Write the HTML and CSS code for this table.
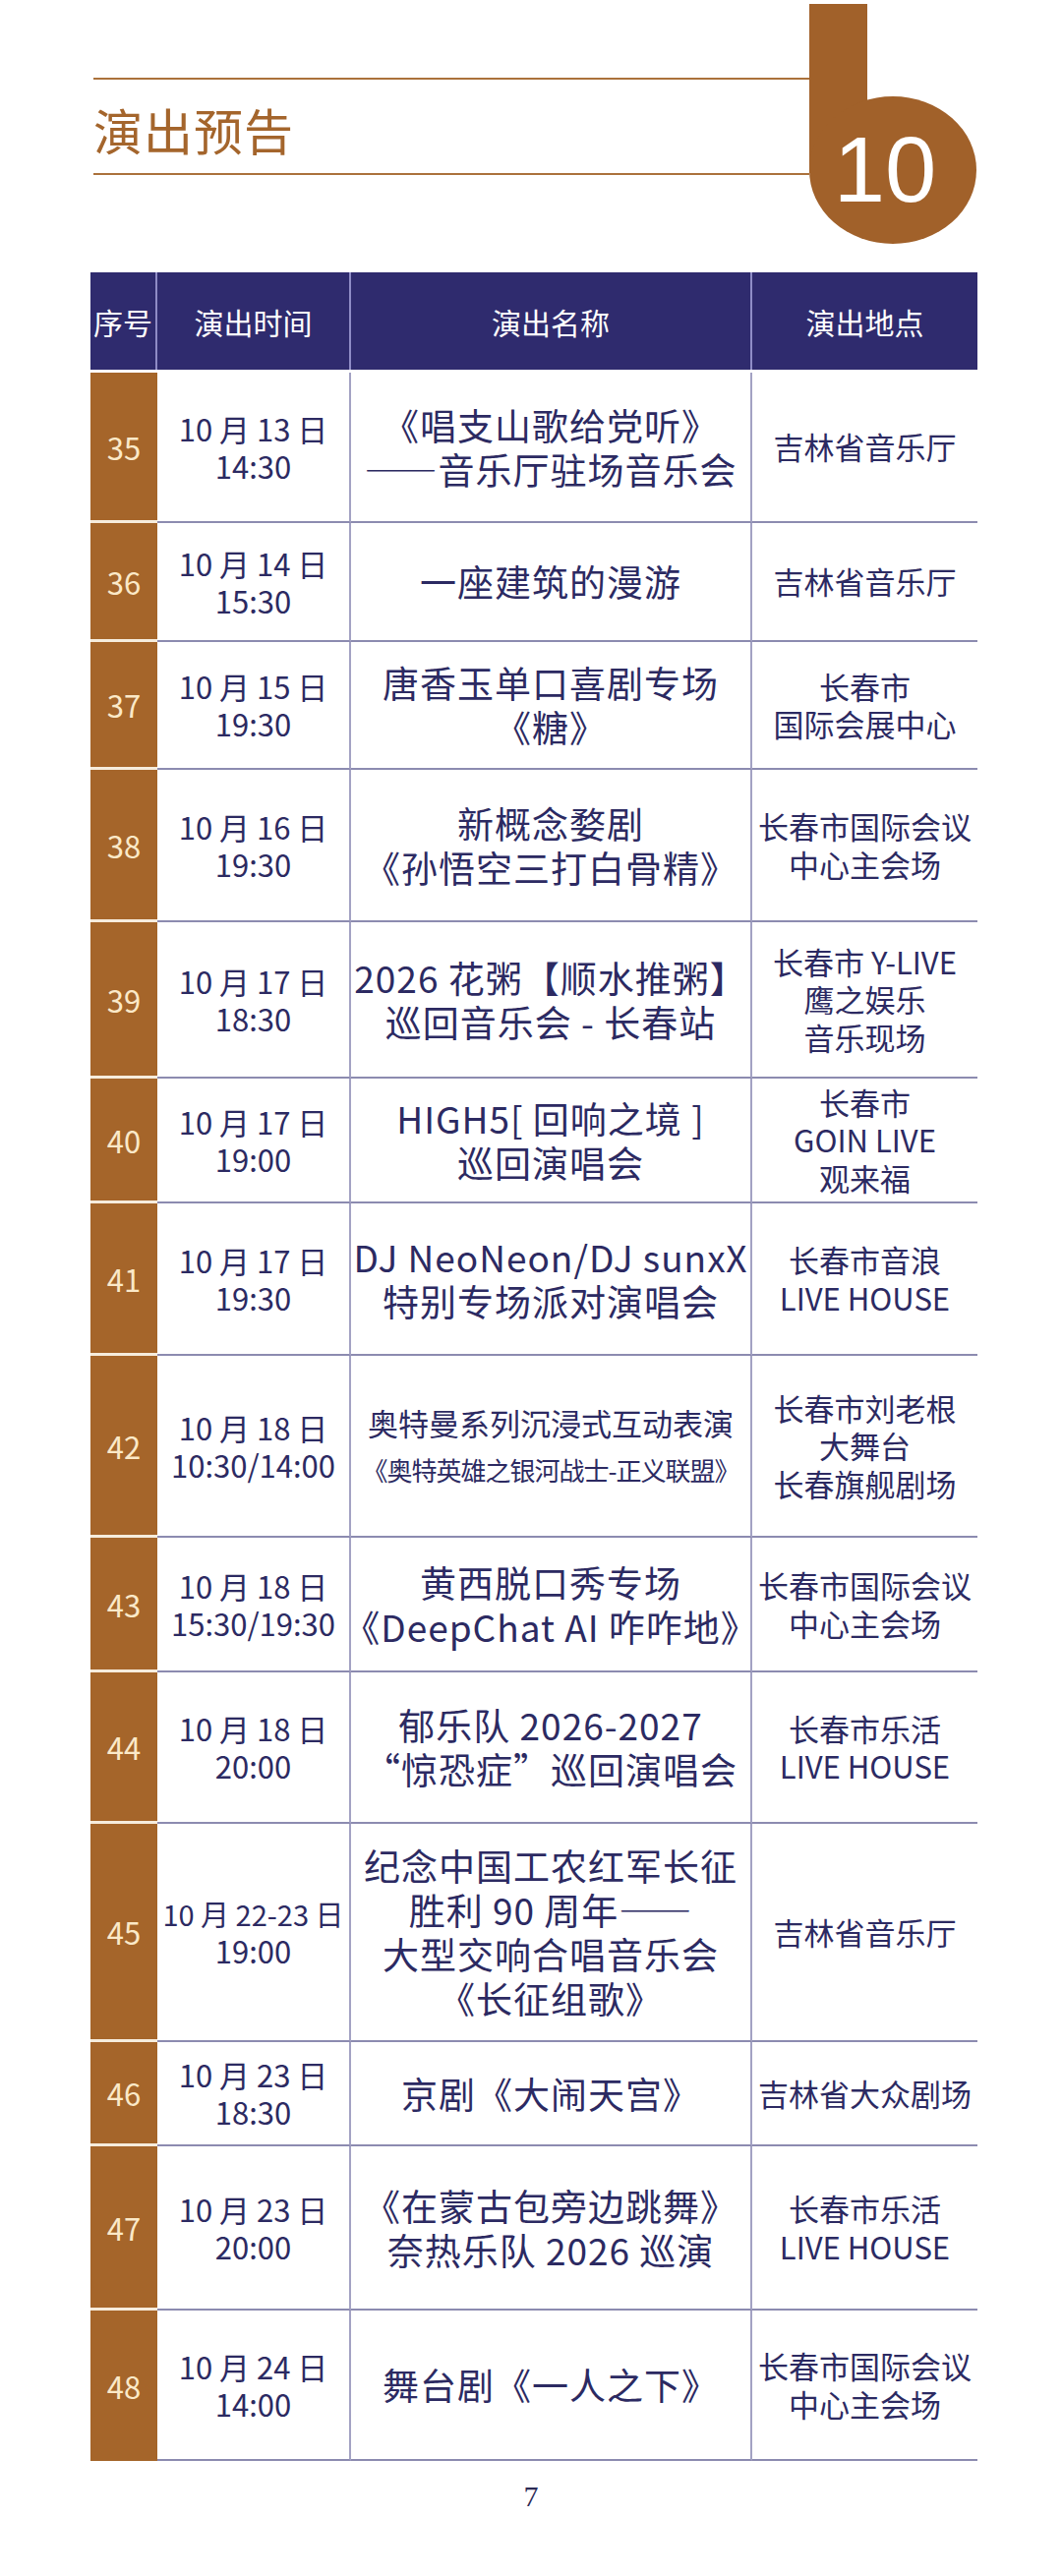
FILE: index.html
```html
<!DOCTYPE html>
<html lang="zh-CN">
<head>
<meta charset="utf-8">
<title>演出预告</title>
<link rel="stylesheet" href="styles.css">
</head>
<body>
<header class="masthead">
  <div class="rule"></div>
  <h1 class="title">演出预告</h1>
  <div class="rule"></div>
  <div class="badge-bar"></div>
  <div class="badge-disc">10</div>
</header>

<section class="schedule">
  <div class="thead">
    <div class="th">序号</div>
    <div class="th">演出时间</div>
    <div class="th">演出名称</div>
    <div class="th last">演出地点</div>
  </div>
  <div class="tbody">
    <div class="row">
      <div class="no"><p>35</p></div>
      <div class="date"><p>10 月 13 日<br>14:30</p></div>
      <div class="name"><p>《唱支山歌给党听》<br>——音乐厅驻场音乐会</p></div>
      <div class="venue"><p>吉林省音乐厅</p></div>
    </div>
    <div class="row">
      <div class="no"><p>36</p></div>
      <div class="date"><p>10 月 14 日<br>15:30</p></div>
      <div class="name"><p>一座建筑的漫游</p></div>
      <div class="venue"><p>吉林省音乐厅</p></div>
    </div>
    <div class="row">
      <div class="no"><p>37</p></div>
      <div class="date"><p>10 月 15 日<br>19:30</p></div>
      <div class="name"><p>唐香玉单口喜剧专场<br>《糖》</p></div>
      <div class="venue"><p>长春市<br>国际会展中心</p></div>
    </div>
    <div class="row">
      <div class="no"><p>38</p></div>
      <div class="date"><p>10 月 16 日<br>19:30</p></div>
      <div class="name"><p>新概念婺剧<br>《孙悟空三打白骨精》</p></div>
      <div class="venue"><p>长春市国际会议<br>中心主会场</p></div>
    </div>
    <div class="row">
      <div class="no"><p>39</p></div>
      <div class="date"><p>10 月 17 日<br>18:30</p></div>
      <div class="name"><p>2026 花粥【顺水推粥】<br>巡回音乐会 - 长春站</p></div>
      <div class="venue"><p>长春市 Y-LIVE<br>鹰之娱乐<br>音乐现场</p></div>
    </div>
    <div class="row">
      <div class="no"><p>40</p></div>
      <div class="date"><p>10 月 17 日<br>19:00</p></div>
      <div class="name"><p>HIGH5[ 回响之境 ]<br>巡回演唱会</p></div>
      <div class="venue"><p>长春市<br>GOIN LIVE<br>观来福</p></div>
    </div>
    <div class="row">
      <div class="no"><p>41</p></div>
      <div class="date"><p>10 月 17 日<br>19:30</p></div>
      <div class="name"><p>DJ NeoNeon/DJ sunxX<br>特别专场派对演唱会</p></div>
      <div class="venue"><p>长春市音浪<br>LIVE HOUSE</p></div>
    </div>
    <div class="row">
      <div class="no"><p>42</p></div>
      <div class="date"><p>10 月 18 日<br>10:30/14:00</p></div>
      <div class="name compact"><p>奥特曼系列沉浸式互动表演<br><span class="tight">《奥特英雄之银河战士-正义联盟》</span></p></div>
      <div class="venue"><p>长春市刘老根<br>大舞台<br>长春旗舰剧场</p></div>
    </div>
    <div class="row">
      <div class="no"><p>43</p></div>
      <div class="date"><p>10 月 18 日<br>15:30/19:30</p></div>
      <div class="name"><p>黄西脱口秀专场<br>《DeepChat AI 咋咋地》</p></div>
      <div class="venue"><p>长春市国际会议<br>中心主会场</p></div>
    </div>
    <div class="row">
      <div class="no"><p>44</p></div>
      <div class="date"><p>10 月 18 日<br>20:00</p></div>
      <div class="name"><p>郁乐队 2026-2027<br>“惊恐症”巡回演唱会</p></div>
      <div class="venue"><p>长春市乐活<br>LIVE HOUSE</p></div>
    </div>
    <div class="row">
      <div class="no"><p>45</p></div>
      <div class="date"><p><span class="range">10 月 22-23 日</span><br>19:00</p></div>
      <div class="name"><p>纪念中国工农红军长征<br>胜利 90 周年——<br>大型交响合唱音乐会<br>《长征组歌》</p></div>
      <div class="venue"><p>吉林省音乐厅</p></div>
    </div>
    <div class="row">
      <div class="no"><p>46</p></div>
      <div class="date"><p>10 月 23 日<br>18:30</p></div>
      <div class="name"><p>京剧《大闹天宫》</p></div>
      <div class="venue"><p>吉林省大众剧场</p></div>
    </div>
    <div class="row">
      <div class="no"><p>47</p></div>
      <div class="date"><p>10 月 23 日<br>20:00</p></div>
      <div class="name"><p>《在蒙古包旁边跳舞》<br>奈热乐队 2026 巡演</p></div>
      <div class="venue"><p>长春市乐活<br>LIVE HOUSE</p></div>
    </div>
    <div class="row">
      <div class="no"><p>48</p></div>
      <div class="date"><p>10 月 24 日<br>14:00</p></div>
      <div class="name"><p>舞台剧《一人之下》</p></div>
      <div class="venue"><p>长春市国际会议<br>中心主会场</p></div>
    </div>
  </div>
</section>

<footer class="page-no">7</footer>
</body>
</html>
```

FILE: styles.css
```css
* {
  box-sizing: border-box;
  margin: 0;
  padding: 0;
}

html, body {
  background: #ffffff;
}

body {
  width: 1080px;
  height: 2620px;
  overflow: hidden;
  font-family: "Noto Sans CJK SC", "Noto Sans", sans-serif;
  color: #2c2a62;
}

/* ---------- masthead ---------- */
.masthead {
  position: relative;
  height: 277px;
  padding-top: 79px;
  padding-left: 95px;
}

.rule {
  width: 728px;
  height: 2px;
  background: #ab713b;
}

.title {
  height: 95px;
  display: flex;
  align-items: center;
  padding-top: 5px;
  font-size: 50px;
  font-weight: 400;
  line-height: 1;
  letter-spacing: 1px;
  color: #a4652c;
}

.badge-bar {
  position: absolute;
  left: 823px;
  top: 4px;
  width: 59px;
  height: 172px;
  background: #a1612a;
}

.badge-disc {
  position: absolute;
  left: 823px;
  top: 98px;
  width: 170px;
  height: 150px;
  border-radius: 50%;
  background: #a1612a;
  display: flex;
  align-items: center;
  justify-content: center;
  padding-right: 16px;
  color: #ffffff;
  font-family: "Liberation Sans", Arial, sans-serif;
  font-size: 94px;
  line-height: 1;
}

/* ---------- table ---------- */
.schedule {
  margin-left: 92px;
  width: 902px;
}

.thead {
  display: grid;
  grid-template-columns: 68px 197px 408px 229px;
  height: 99px;
  margin-bottom: 3px;
  background: #2f2b6e;
}

.th {
  display: flex;
  align-items: center;
  justify-content: center;
  color: #ffffff;
  font-size: 30px;
  line-height: 1;
  border-right: 2px solid #8f8cc6;
  white-space: nowrap;
}

.th.last {
  border-right: none;
}

.row {
  display: grid;
  grid-template-columns: 68px 197px 408px 229px;
  height: 153px;
}

.tbody .row:nth-child(1)  { height: 153px; }
.tbody .row:nth-child(2)  { height: 121px; }
.tbody .row:nth-child(3)  { height: 130px; }
.tbody .row:nth-child(4)  { height: 155px; }
.tbody .row:nth-child(5)  { height: 159px; }
.tbody .row:nth-child(6)  { height: 127px; }
.tbody .row:nth-child(7)  { height: 155px; }
.tbody .row:nth-child(8)  { height: 185px; }
.tbody .row:nth-child(9)  { height: 137px; }
.tbody .row:nth-child(10) { height: 154px; }
.tbody .row:nth-child(11) { height: 222px; }
.tbody .row:nth-child(12) { height: 106px; }
.tbody .row:nth-child(13) { height: 167px; }
.tbody .row:nth-child(14) { height: 153px; }

.row > div {
  display: flex;
  align-items: center;
  justify-content: center;
  text-align: center;
  white-space: nowrap;
}

.no {
  background: #a5652a;
  border-bottom: 3px solid #f6ecdc;
  color: #fbe9c8;
  font-size: 31px;
  line-height: 1;
}

.tbody .row:last-child .no {
  border-bottom: none;
}

.date,
.name,
.venue {
  border-bottom: 2px solid #8c8bb0;
}

.date {
  border-right: 2px solid #a3a2c3;
  font-size: 31px;
  line-height: 38px;
}

.date .range {
  font-size: 29px;
}

.name {
  border-right: 2px solid #a3a2c3;
  font-size: 37px;
  line-height: 45px;
  letter-spacing: 1px;
}

.name.compact {
  font-size: 31px;
  line-height: 46px;
  letter-spacing: 0;
}

.name .tight {
  font-size: 26px;
  letter-spacing: -1px;
}

.venue {
  font-size: 31px;
  line-height: 38.5px;
}

/* ---------- footer ---------- */
.page-no {
  margin-top: 21px;
  text-align: center;
  font-family: "Liberation Serif", "Times New Roman", serif;
  font-size: 30px;
  line-height: 30px;
  color: #2c2a55;
}
```
